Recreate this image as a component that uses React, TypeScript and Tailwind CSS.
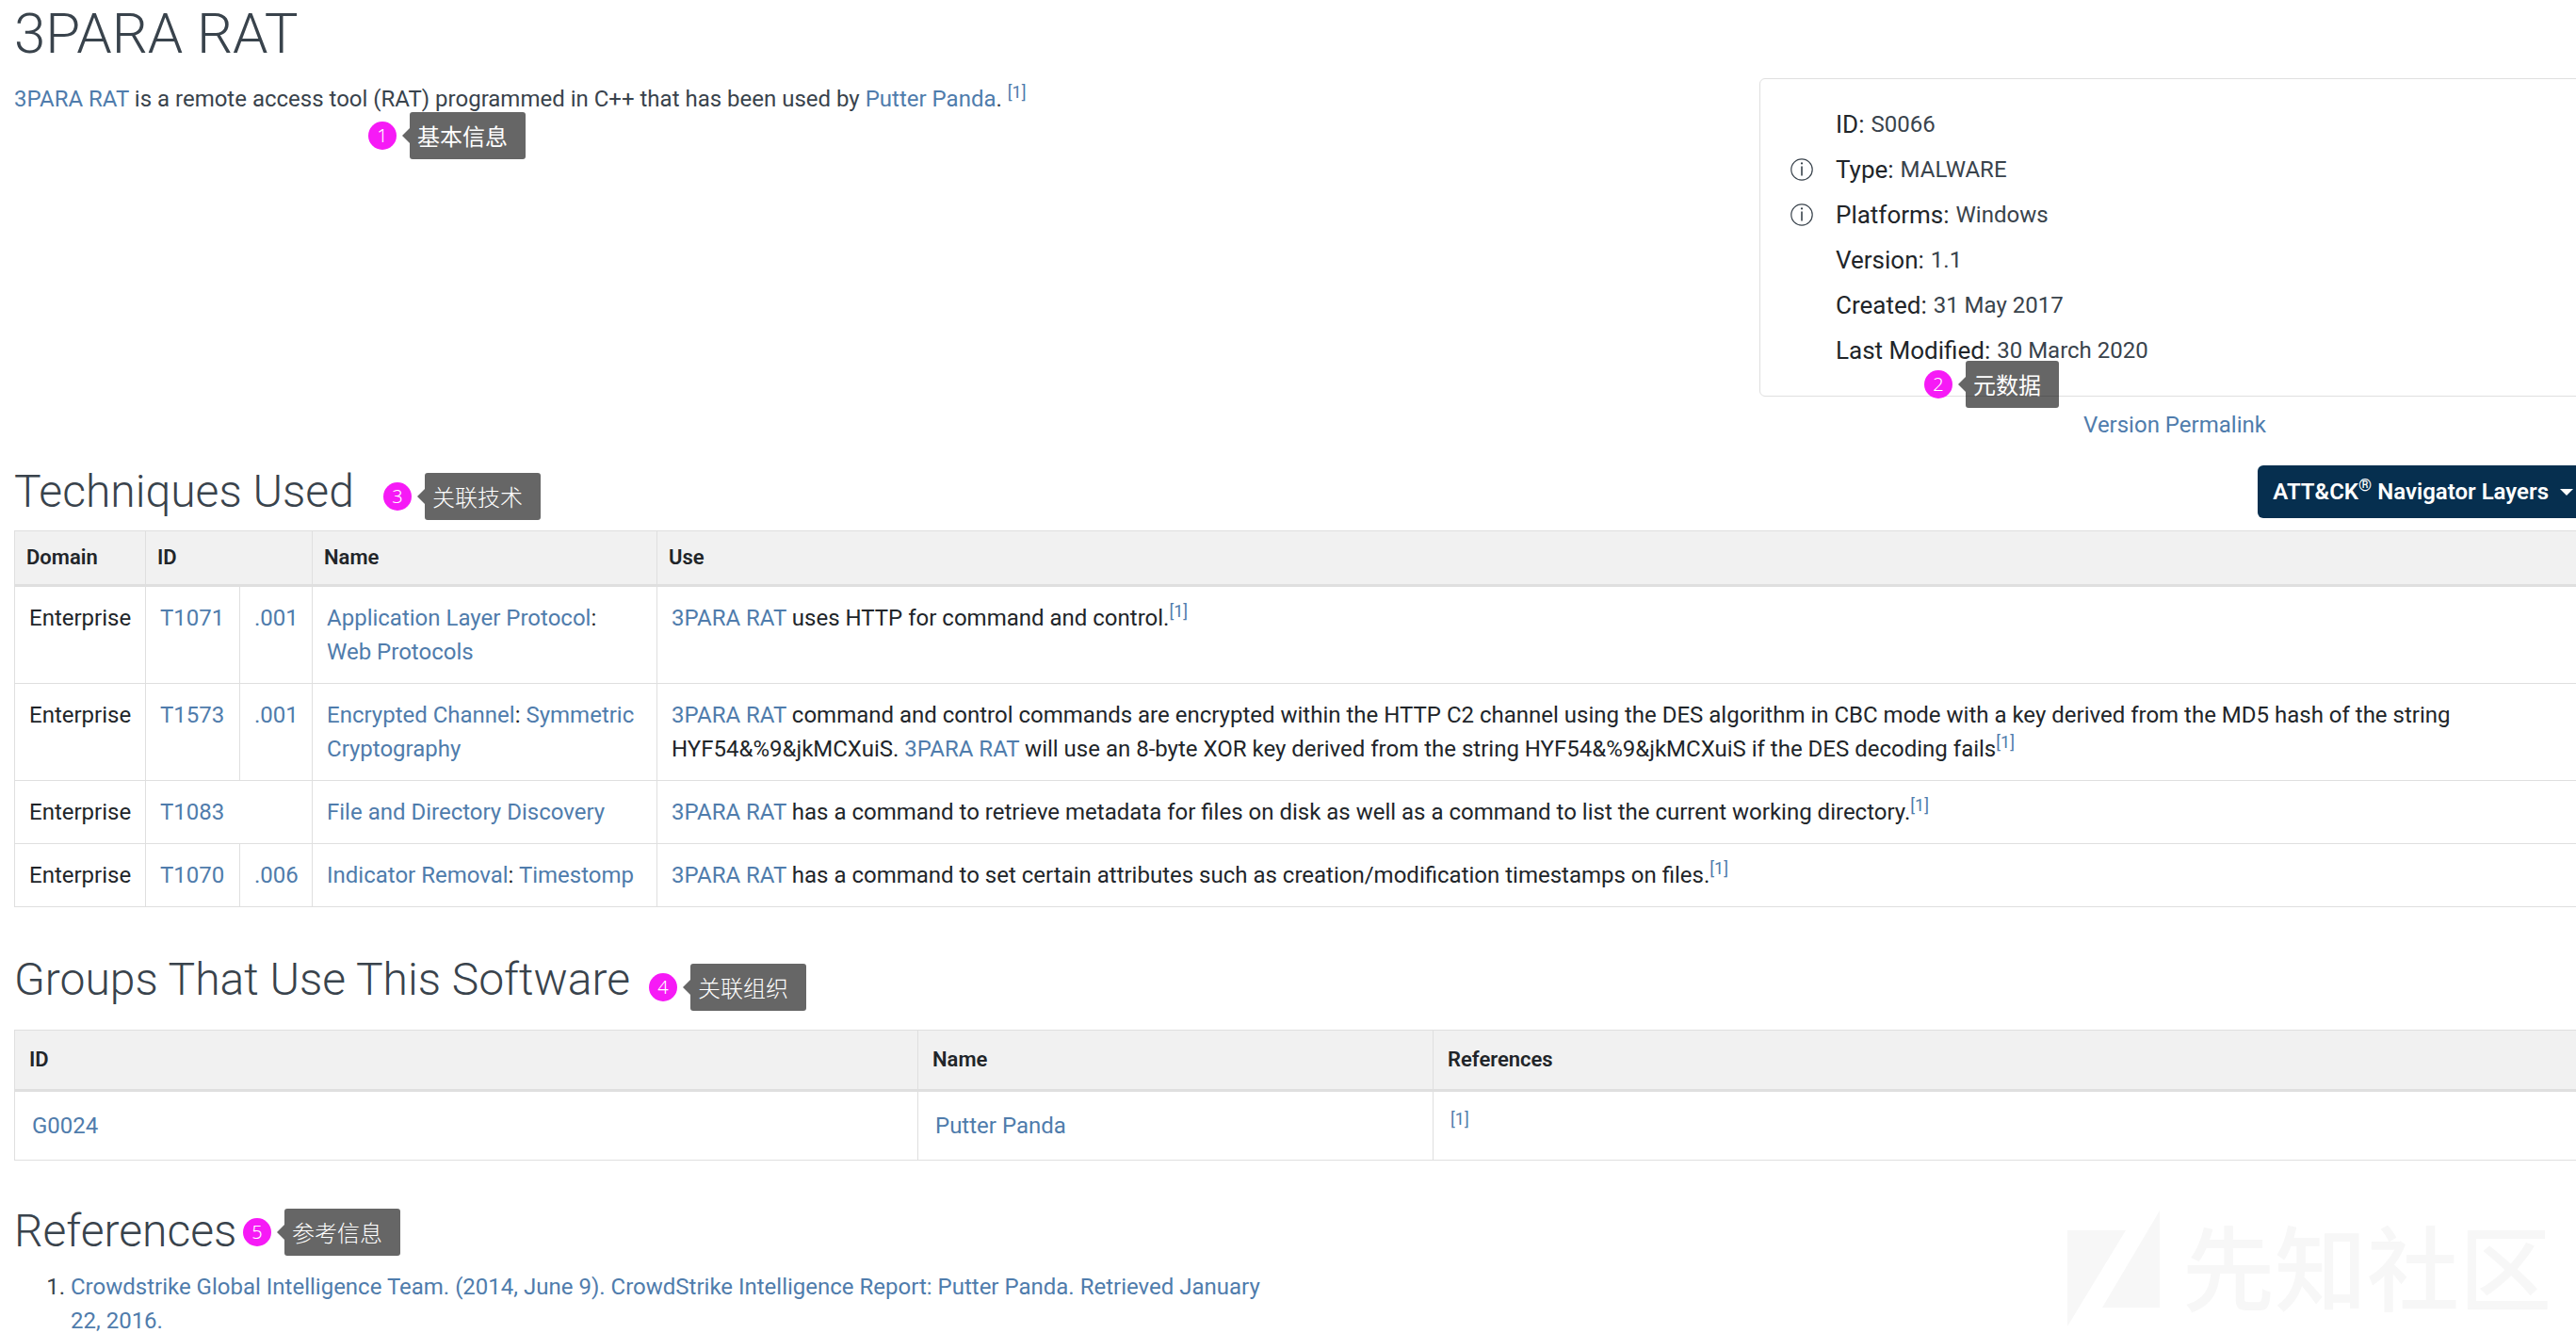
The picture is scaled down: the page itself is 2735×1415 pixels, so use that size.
import type { ReactNode } from "react";

function Link({ children }: { children: ReactNode }) {
  return (
    <a href="#" className="text-[#4f7cac] hover:underline">
      {children}
    </a>
  );
}

function Cite() {
  return (
    <sup className="relative -top-[9px] align-baseline text-[18px] leading-none">
      <Link>[1]</Link>
    </sup>
  );
}

function Marker({ n, label, className }: { n: number; label: string; className: string }) {
  return (
    <div className={`absolute z-10 flex items-center font-['Noto_Sans','Noto_Sans_CJK_SC',sans-serif] ${className}`}>
      <span className="flex size-[30px] items-center justify-center rounded-full bg-[#f61af6] text-[20px] leading-none font-light text-white">
        {n}
      </span>
      <span className="ml-1.5 h-0 w-0 border-y-8 border-r-8 border-y-transparent border-r-black/60" />
      <span className="flex h-[50px] items-center rounded-[3px] bg-black/60 pr-[19px] pl-2 font-['Noto_Sans_CJK_SC',sans-serif] text-[24px] leading-none whitespace-nowrap text-white">
        {label}
      </span>
    </div>
  );
}

function InfoIcon() {
  return (
    <svg viewBox="0 0 24 24" className="size-6" fill="none" stroke="#39434c" aria-hidden="true">
      <circle cx="12" cy="12" r="11.2" strokeWidth="1.2" />
      <path d="M12 8.5V18.5" strokeWidth="1.6" />
      <circle cx="12" cy="5.4" r="1.1" fill="#39434c" stroke="none" />
    </svg>
  );
}

const card: { label: string; value: string; info?: boolean }[] = [
  { label: "ID", value: "S0066" },
  { label: "Type", value: "MALWARE", info: true },
  { label: "Platforms", value: "Windows", info: true },
  { label: "Version", value: "1.1" },
  { label: "Created", value: "31 May 2017" },
  { label: "Last Modified", value: "30 March 2020" },
];

const techniques: { id: string; sub?: string; name: ReactNode; use: ReactNode }[] = [
  {
    id: "T1071",
    sub: ".001",
    name: (
      <>
        <Link>Application Layer Protocol</Link>: <Link>Web Protocols</Link>
      </>
    ),
    use: (
      <>
        <Link>3PARA RAT</Link> uses HTTP for command and control.
        <Cite />
      </>
    ),
  },
  {
    id: "T1573",
    sub: ".001",
    name: (
      <>
        <Link>Encrypted Channel</Link>: <Link>Symmetric Cryptography</Link>
      </>
    ),
    use: (
      <>
        <Link>3PARA RAT</Link> command and control commands are encrypted within the HTTP C2 channel using the DES
        algorithm in CBC mode with a key derived from the MD5 hash of the string HYF54&amp;%9&amp;jkMCXuiS.{" "}
        <Link>3PARA RAT</Link> will use an 8-byte XOR key derived from the string HYF54&amp;%9&amp;jkMCXuiS if the DES
        decoding fails
        <Cite />
      </>
    ),
  },
  {
    id: "T1083",
    name: <Link>File and Directory Discovery</Link>,
    use: (
      <>
        <Link>3PARA RAT</Link> has a command to retrieve metadata for files on disk as well as a command to list the
        current working directory.
        <Cite />
      </>
    ),
  },
  {
    id: "T1070",
    sub: ".006",
    name: (
      <>
        <Link>Indicator Removal</Link>: <Link>Timestomp</Link>
      </>
    ),
    use: (
      <>
        <Link>3PARA RAT</Link> has a command to set certain attributes such as creation/modification timestamps on
        files.
        <Cite />
      </>
    ),
  },
];

const table =
  "w-full table-fixed border-collapse text-left text-[#212529] [&_td]:border [&_td]:border-[#dfdfdf] [&_td]:align-top [&_th]:border [&_th]:border-[#dfdfdf] [&_th]:border-b-3 [&_th]:bg-[#f1f1f1] [&_th]:text-[22px] [&_th]:font-semibold";

export default function App() {
  return (
    <div className="min-h-screen overflow-x-clip bg-white pl-[15px] font-[Roboto,sans-serif] text-[24px] leading-9 text-[#39434c]">
      <main className="-mr-[15px]">
        <h1 className="text-[60px] leading-[72px] font-light">3PARA RAT</h1>

        <div className="flex items-start justify-between gap-8 pt-[11px]">
          <p className="relative pt-1">
            <Link>3PARA RAT</Link> is a remote access tool (RAT) programmed in C++ that has been used by{" "}
            <Link>Putter Panda</Link>. <Cite />
            <Marker n={1} label="基本信息" className="top-9 left-[376px]" />
          </p>
          <aside className="w-[882px] shrink-0">
            <div className="relative rounded-md border border-[#dfdfdf] px-8 py-6">
              <dl>
                {card.map((c) => (
                  <div key={c.label} className="flex h-12 items-center">
                    <span className="w-12">{c.info && <InfoIcon />}</span>
                    <dt className="text-[26px] text-[#212529]">{c.label}:</dt>
                    <dd className="ml-[7px]">{c.value}</dd>
                  </div>
                ))}
              </dl>
              <Marker n={2} label="元数据" className="-bottom-[13px] left-[174px]" />
            </div>
            <p className="pt-3 text-center">
              <Link>Version Permalink</Link>
            </p>
          </aside>
        </div>

        <section>
          <div className="mb-3 flex items-center justify-between pt-6">
            <h2 className="relative text-[48px] leading-[58px] font-light">
              Techniques Used
              <Marker n={3} label="关联技术" className="top-[9px] left-[392px]" />
            </h2>
            <button
              type="button"
              className="flex h-14 items-center rounded-md bg-[#062f4f] pr-[18px] pl-4 text-[24px] font-semibold whitespace-nowrap text-white"
            >
              <span>
                ATT&amp;CK<sup className="relative -top-[9px] align-baseline text-[18px] leading-none">®</sup>{" "}
                Navigator Layers
              </span>
              <span className="ml-3 border-x-7 border-t-7 border-x-transparent border-t-white" />
            </button>
          </div>
          <table className={table}>
            <colgroup>
              <col className="w-[139px]" />
              <col className="w-[100px]" />
              <col className="w-[77px]" />
              <col className="w-[366px]" />
              <col />
            </colgroup>
            <thead>
              <tr className="[&>th]:px-3 [&>th]:py-2.5">
                <th>Domain</th>
                <th colSpan={2}>ID</th>
                <th>Name</th>
                <th>Use</th>
              </tr>
            </thead>
            <tbody>
              {techniques.map((t) => (
                <tr key={t.id} className="[&>td]:px-[15px] [&>td]:py-[15px]">
                  <td>Enterprise</td>
                  <td colSpan={t.sub ? 1 : 2}>
                    <Link>{t.id}</Link>
                  </td>
                  {t.sub && (
                    <td>
                      <Link>{t.sub}</Link>
                    </td>
                  )}
                  <td>{t.name}</td>
                  <td>{t.use}</td>
                </tr>
              ))}
            </tbody>
          </table>
        </section>

        <section className="pt-12">
          <h2 className="relative mb-6 text-[48px] leading-[58px] font-light">
            Groups That Use This Software
            <Marker n={4} label="关联组织" className="top-3 left-[674px]" />
          </h2>
          <table className={table}>
            <colgroup>
              <col className="w-[959px]" />
              <col className="w-[547px]" />
              <col />
            </colgroup>
            <thead>
              <tr className="[&>th]:px-[15px] [&>th]:py-[13px]">
                <th>ID</th>
                <th>Name</th>
                <th>References</th>
              </tr>
            </thead>
            <tbody>
              <tr className="[&>td]:px-[18px] [&>td]:py-[18px]">
                <td>
                  <Link>G0024</Link>
                </td>
                <td>
                  <Link>Putter Panda</Link>
                </td>
                <td>
                  <Cite />
                </td>
              </tr>
            </tbody>
          </table>
        </section>

        <section className="pt-[46px]">
          <h2 className="relative mb-3 text-[48px] leading-[58px] font-light">
            References
            <Marker n={5} label="参考信息" className="top-[5px] left-[243px]" />
          </h2>
          <ol className="w-1/2 list-decimal pr-4 pl-[60px]">
            <li>
              <Link>
                Crowdstrike Global Intelligence Team. (2014, June 9). CrowdStrike Intelligence Report: Putter Panda.
                Retrieved January 22, 2016.
              </Link>
            </li>
          </ol>
        </section>
      </main>

      <div className="pointer-events-none fixed right-[26px] bottom-1.5 flex items-end gap-6 text-[#f7f7f7]">
        <svg viewBox="0 0 98 124" className="h-[124px] w-[98px]" fill="currentColor" aria-hidden="true">
          <path d="M0 21H62L0 123Z" />
          <path d="M98 0V103H37Z" />
        </svg>
        <span className="mb-1.5 font-['Noto_Sans_CJK_SC',sans-serif] text-[98px] leading-[124px] font-medium">
          先知社区
        </span>
      </div>
    </div>
  );
}
